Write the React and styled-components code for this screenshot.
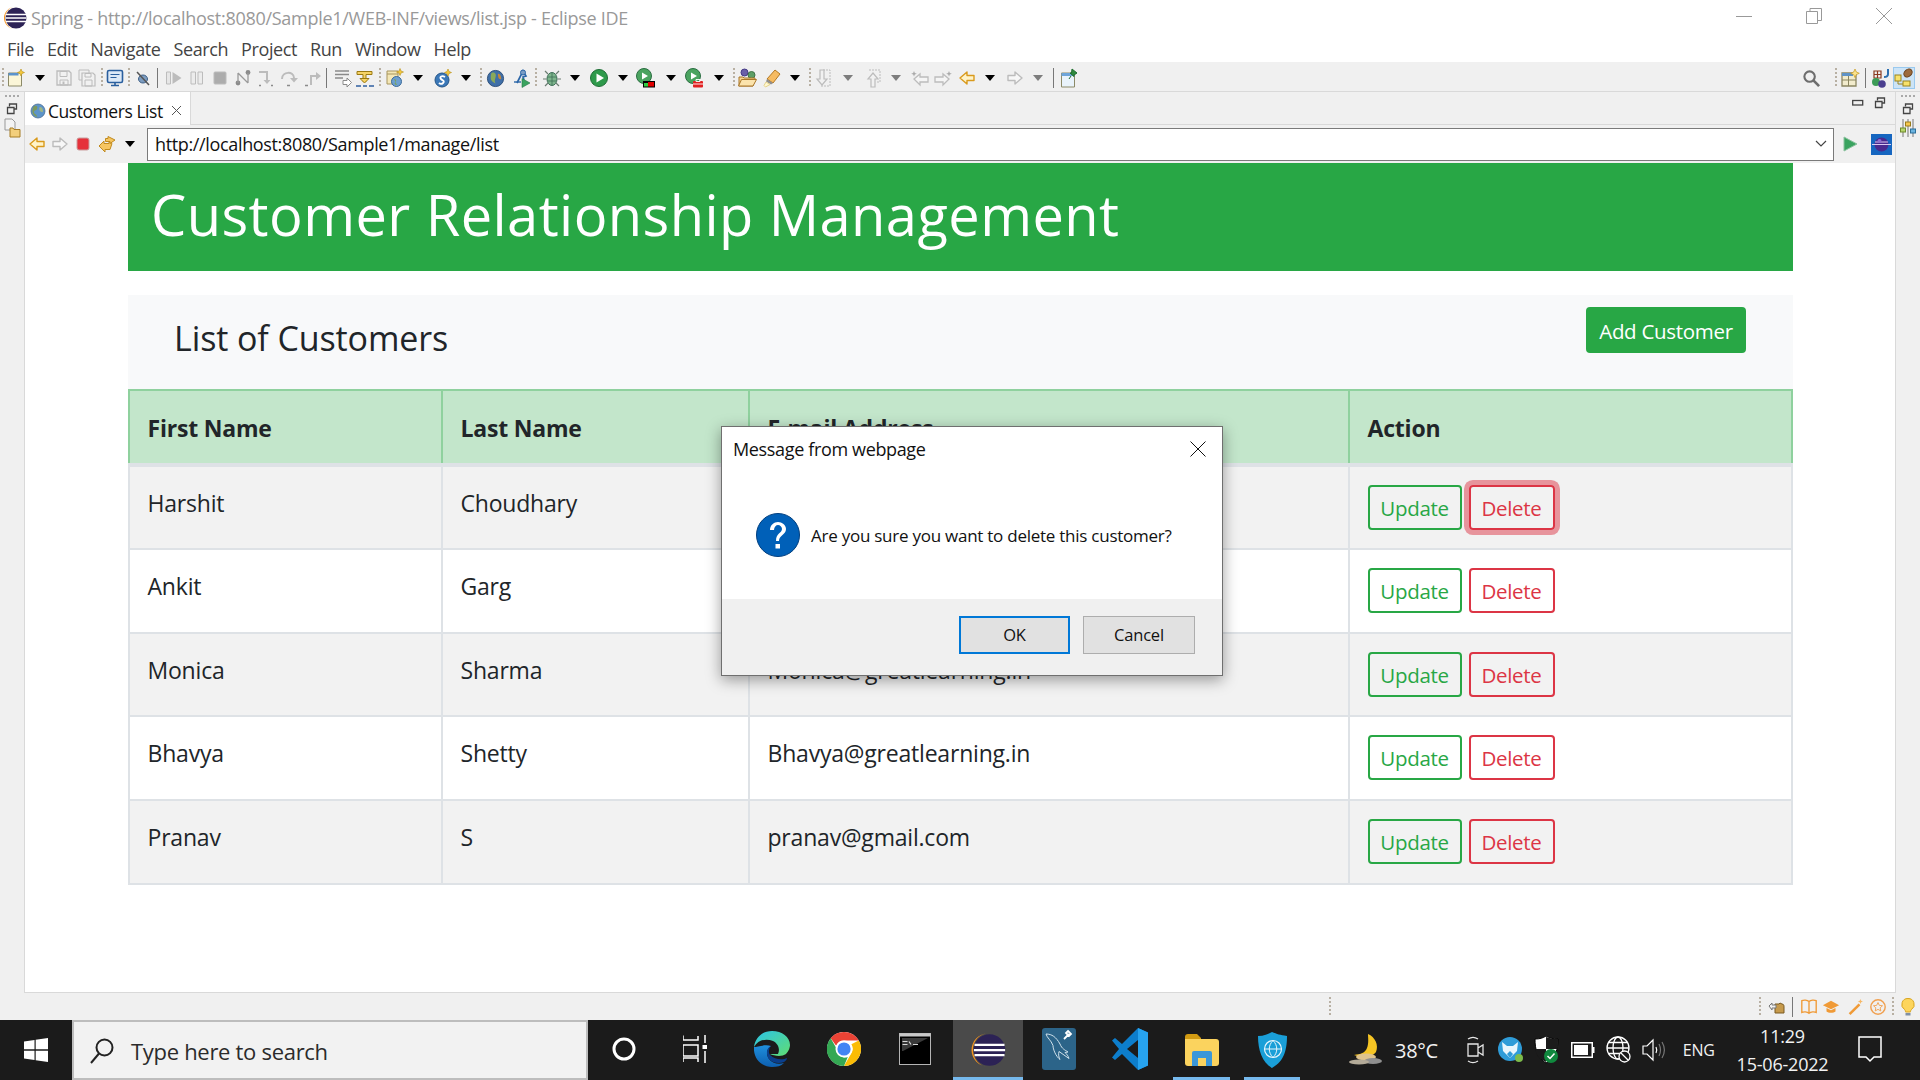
import React from "react";
import styled, { createGlobalStyle } from "styled-components";

const FONT = '"Open Sans", "Noto Sans", "Liberation Sans", sans-serif';

const Global = createGlobalStyle`
  html, body { margin: 0; padding: 0; background: #f0f0f0; }
  * { box-sizing: border-box; }
  body { font-family: ${FONT}; overflow: hidden; }
`;

const Window = styled.div`
  position: relative;
  width: 1920px;
  height: 1080px;
  display: flex;
  flex-direction: column;
  overflow: hidden;
`;

const TitleBar = styled.div`
  height: 36px;
  background: #fff;
  display: flex;
  align-items: center;
  padding-left: 3px;
  color: #999;
  font-size: 18px;
`;
const TitleText = styled.span`
  margin-left: 4px;
  letter-spacing: -0.28px;
  white-space: nowrap;
`;
const Caption = styled.div`
  margin-left: auto;
  display: flex;
  align-items: center;
  gap: 54px;
  padding-right: 28px;
  margin-top: -4px;
`;
const MenuBar = styled.div`
  height: 26px;
  background: #fff;
  display: flex;
  align-items: center;
  padding-left: 7px;
  gap: 13px;
  font-size: 18px;
  color: #444;
  letter-spacing: -0.4px;
`;
const Toolbar = styled.div`
  height: 30px;
  padding-top: 3px;
  background: #f0f0f0;
  border-bottom: 1px solid #d9d9d9;
  display: flex;
  align-items: center;
  flex: none;
`;
const Slot = styled.div`
  flex: none;
  width: 20px;
  height: 20px;
  margin-left: ${(p) => p.$gap}px;
  display: flex;
  align-items: center;
  justify-content: center;
  svg { flex: none; }
`;
const Caret = styled.div`
  width: 0;
  height: 0;
  border-left: 5.5px solid transparent;
  border-right: 5.5px solid transparent;
  border-top: 6px solid ${(p) => (p.$dim ? "#7d7d7d" : "#000")};
`;
const Grip = styled.div`
  width: 2px;
  height: 20px;
  background: repeating-linear-gradient(#b8b0a3 0 2px, transparent 2px 4px);
`;
const GripH = styled.div`
  width: 14px;
  height: 2px;
  background: repeating-linear-gradient(90deg, #a9a9a9 0 2px, transparent 2px 4px);
`;
const Sep = styled.div`
  width: 1px;
  height: 20px;
  background: #777;
`;
const Workspace = styled.div`
  flex: 1;
  display: flex;
  min-height: 0;
`;
const Trim = styled.div`
  width: 24px;
  flex: none;
  display: flex;
  flex-direction: column;
  align-items: center;
  padding-top: 3px;
  gap: 6px;
  svg:last-child { margin-top: -3px; }
`;
const Panel = styled.div`
  flex: 1;
  display: flex;
  flex-direction: column;
  border-left: 1px solid #d9d9d9;
  border-right: 1px solid #d9d9d9;
  border-bottom: 1px solid #d9d9d9;
  min-width: 0;
`;
const TabRow = styled.div`
  height: 33px;
  flex: none;
  display: flex;
  align-items: stretch;
  border-bottom: 1px solid #d9d9d9;
  background: #f0f0f0;
`;
const Tab = styled.div`
  width: 166px;
  margin-bottom: -1px;
  padding: 4px 0 0 5px;
  background: #fff;
  border-right: 1px solid #d9d9d9;
  display: flex;
  align-items: center;
  gap: 2px;
  font-size: 17.5px;
  color: #111;
  letter-spacing: -0.45px;
  white-space: nowrap;
`;
const TabClose = styled.span`
  margin-left: 6px;
  display: flex;
`;
const TabTools = styled.div`
  margin-left: auto;
  display: flex;
  align-items: center;
  gap: 10px;
  padding: 0 9px 10px 0;
`;
const AddressBar = styled.div`
  height: 38px;
  flex: none;
  padding-right: 4px;
  background: #f0f0f0;
  display: flex;
  align-items: center;
`;
const UrlBox = styled.div`
  flex: 1;
  height: 33px;
  margin-left: 7px;
  background: #fff;
  border: 1.5px solid #7a7a7a;
  display: flex;
  align-items: center;
  justify-content: space-between;
  padding: 0 6px 0 7px;
  font-size: 18px;
  color: #111;
  letter-spacing: -0.35px;
`;
const Browser = styled.div`
  flex: 1;
  background: #fff;
  padding: 0 102px 0 103px;
`;
const Jumbotron = styled.div`
  height: 108px;
  background: #28a745;
  color: #fff;
  font-size: 56px;
  font-weight: 400;
  line-height: 103px;
  padding-left: 23px;
  letter-spacing: 0.44px;
  white-space: nowrap;
`;
const ListHead = styled.div`
  height: 94px;
  margin-top: 24px;
  background: #f8f9fa;
  display: flex;
  justify-content: space-between;
  align-items: flex-start;
  padding: 12px 47px 0 46px;
`;
const ListTitle = styled.h2`
  margin: 7px 0 0;
  font-size: 34px;
  font-weight: 400;
  line-height: 48px;
  color: #212529;
  letter-spacing: -0.1px;
`;
const ActionButton = styled.button`
  font-family: ${FONT};
  font-size: 20.5px;
  letter-spacing: -0.3px;
  white-space: nowrap;
  height: ${(p) => (p.$solid ? "46px" : "45px")};
  padding: 1px 0 0;
  width: ${(p) => (p.$solid ? "160px" : p.$tone === "red" ? "86px" : "94px")};
  border-radius: 4px;
  border: 2px solid ${(p) => (p.$tone === "red" ? "#dc3545" : "#28a745")};
  background: ${(p) => (p.$solid ? "#28a745" : "transparent")};
  color: ${(p) => (p.$solid ? "#fff" : p.$tone === "red" ? "#dc3545" : "#28a745")};
  box-shadow: ${(p) => (p.$focus ? "0 0 0 5px rgba(220,53,69,.5)" : "none")};
`;
const Table = styled.table`
  width: 100%;
  table-layout: fixed;
  border-collapse: collapse;
  font-size: 23px;
  color: #212529;
  letter-spacing: -0.2px;
`;
const Th = styled.th`
  height: 75px;
  background: #c3e6cb;
  border: 2px solid #8fd19e;
  border-bottom: 4px solid #dee2e6;
  padding: 2px 17.5px 0;
  text-align: left;
  font-weight: 700;
  width: ${(p) => p.$w}px;
`;
const Row = styled.tr`
  background: ${(p) => (p.$odd ? "#f2f2f2" : "#fff")};
`;
const Td = styled.td`
  height: 83.8px;
  border: 2px solid #dee2e6;
  padding: 18px 17.5px 0;
  vertical-align: top;
  line-height: 37px;
`;
const ButtonPair = styled.div`
  display: flex;
  gap: 7px;
`;
const StatusBar = styled.div`
  height: 27px;
  flex: none;
  background: #f0f0f0;
  display: flex;
  align-items: center;
`;
const Taskbar = styled.div`
  height: 60px;
  flex: none;
  background: #1b1b1b;
  display: flex;
  align-items: center;
`;
const SearchBox = styled.div`
  width: 516px;
  height: 60px;
  margin-left: 26px;
  flex: none;
  background: #f2f2f2;
  border: 2px solid #bdbdbd;
  display: flex;
  align-items: center;
  padding: 1px 0 0 16px;
  gap: 17px;
  font-size: 22px;
  color: #2b2b2b;
  letter-spacing: -0.3px;
`;
const TaskItem = styled.div`
  flex: none;
  width: ${(p) => p.$w}px;
  height: 60px;
  margin-left: ${(p) => p.$gap}px;
  display: flex;
  align-items: center;
  justify-content: center;
  background: ${(p) => (p.$active ? "#4a4a4a" : "transparent")};
  border-bottom: 3px solid ${(p) => (p.$open ? "#76b9ed" : "transparent")};
  padding-top: ${(p) => (p.$open ? "3px" : "0")};
`;
const Tray = styled.div`
  flex: none;
  display: flex;
  align-items: center;
  height: 60px;
  color: #f2f2f2;
`;
const TrayText = styled.span`
  flex: none;
  margin-left: ${(p) => p.$gap}px;
  font-size: ${(p) => p.$size}px;
  letter-spacing: -0.3px;
`;
const Clock = styled.div`
  flex: none;
  width: 110px;
  margin-left: 13px;
  text-align: center;
  font-size: 18px;
  line-height: 28px;
  letter-spacing: -0.2px;
  white-space: nowrap;
`;
const Dialog = styled.div`
  position: absolute;
  left: 721px;
  top: 426px;
  width: 502px;
  height: 250px;
  background: #fff;
  border: 1px solid #6f6f6f;
  box-shadow: 0 4px 14px rgba(0, 0, 0, 0.38);
  display: flex;
  flex-direction: column;
  color: #111;
`;
const DialogHead = styled.div`
  height: 44px;
  display: flex;
  align-items: center;
  justify-content: space-between;
  padding: 0 16px 0 11px;
  font-size: 18px;
  letter-spacing: -0.35px;
`;
const DialogBody = styled.div`
  flex: 1;
  display: flex;
  align-items: center;
  gap: 11px;
  padding: 0 0 0 34px;
  font-size: 17px;
  letter-spacing: -0.25px;
`;
const DialogFoot = styled.div`
  height: 76px;
  background: #f0f0f0;
  display: flex;
  justify-content: flex-end;
  gap: 13px;
  padding: 17px 27px 0 0;
`;
const DialogButton = styled.button`
  font-family: ${FONT};
  font-size: 16.5px;
  letter-spacing: -0.2px;
  width: ${(p) => (p.$primary ? "111px" : "112px")};
  height: 38px;
  padding: 0 0 2px;
  background: #e1e1e1;
  color: #111;
  border: ${(p) => (p.$primary ? "2px solid #0078d7" : "1.5px solid #adadad")};
`;

/* ---- drawings ---- */
const S = ({ s = 20, v = 20, children }) => (
  <svg width={s} height={s} viewBox={`0 0 ${v} ${v}`} fill="none">{children}</svg>
);
const OFF = "#bcbcbc";
const Eclipse = ({ s = 24 }) => (
  <S s={s} v={24}>
    <path d="M12 1A11 11 0 0 0 12 23A10 11 0 0 1 12 1Z" fill="#f7941e" />
    <circle cx="13" cy="12" r="10.5" fill="#2c2255" />
    <path d="M3 8.6h20M2.6 12h20.8M3 15.4h20" stroke="#fff" strokeWidth="1.5" />
  </S>
);
const Globe = ({ s = 16 }) => (
  <S s={s} v={16}>
    <circle cx="8" cy="8" r="7" fill="#5d94c9" />
    <path d="M4 3c3-1 4 1 3 3S4 7 4 9s2 2 3 4-3 0-4-2-1-6 1-8Z" fill="#7c9a5e" />
    <path d="M10 4c2 0 3 2 3 4s-2 1-3 0-1-4 0-4Z" fill="#9db586" />
    <circle cx="8" cy="8" r="7" stroke="#4a6d94" strokeWidth=".8" />
  </S>
);
const Arrow = ({ c = "#d99a1c", f = "#fff3c8", flip }) => (
  <S v={20}>
    <path
      d="M3 10l7-6v3.5h7v5h-7V16Z"
      fill={f}
      stroke={c}
      strokeWidth="1.4"
      strokeLinejoin="round"
      transform={flip ? "matrix(-1 0 0 1 20 0)" : undefined}
    />
  </S>
);
const RestoreSmall = () => (
  <S s={12} v={12}>
    <path d="M3.5 3.5V1h7v5H8" stroke="#444" strokeWidth="1.3" />
    <path d="M1.5 4.5h6.5v6H1.5Z" stroke="#444" strokeWidth="1.3" />
  </S>
);
const ToolIcons = {
  new: (
    <S>
      <path d="M2.5 5h13v13h-13Z" fill="#fbf6d8" stroke="#8c8a68" />
      <path d="M2.5 5h10v2.5h-10Z" fill="#5b93cc" />
      <path d="M15 1l1 2.5 2.5 1-2.5 1-1 2.5-1-2.5-2.5-1 2.5-1Z" fill="#f5c93b" stroke="#b58d18" strokeWidth=".6" />
    </S>
  ),
  save: (
    <S>
      <path d="M3 3h12l2 2v12H3Z" fill="#f1f1f1" stroke={OFF} strokeWidth="1.3" />
      <path d="M6 3.5h7v5H6ZM6 12h8v5H6Z" stroke={OFF} />
      <path d="M8.5 13.5h2v2.5h-2Z" fill={OFF} />
    </S>
  ),
  saveAll: (
    <S>
      <path d="M2 2h10v3M2 2v10h3" stroke={OFF} />
      <path d="M5 5h11l2 2v11H5Z" fill="#f1f1f1" stroke={OFF} strokeWidth="1.2" />
      <path d="M8 12h7v6H8ZM8 5.5h6v3.5H8Z" stroke={OFF} />
    </S>
  ),
  monitor: (
    <S>
      <rect x="2.5" y="2.5" width="15" height="12" rx="1.5" fill="#dce9f7" stroke="#2a5f9e" strokeWidth="1.6" />
      <path d="M5.5 6.5h9M5.5 9.5h6" stroke="#2a5f9e" strokeWidth="1.2" />
      <path d="M6 17.5h8M10 15v2" stroke="#2a5f9e" strokeWidth="1.6" />
    </S>
  ),
  skip: (
    <S>
      <ellipse cx="10" cy="11" rx="4.5" ry="4" fill="#7c9cc0" stroke="#3e5f86" />
      <path d="M4 4l12 13" stroke="#555" strokeWidth="1.5" />
    </S>
  ),
  resume: (
    <S>
      <path d="M2.5 4h4v12h-4Z" fill="#e6e6e6" stroke={OFF} />
      <path d="M8.5 4l9 6-9 6Z" fill={OFF} />
    </S>
  ),
  pause: (
    <S>
      <path d="M4 4h4.5v12H4ZM11 4h4.5v12H11Z" fill="#ececec" stroke={OFF} />
    </S>
  ),
  stop: (
    <S>
      <rect x="4" y="4" width="12" height="12" rx="1" fill="#acacac" stroke={OFF} />
    </S>
  ),
  disconnect: (
    <S>
      <circle cx="5" cy="15" r="2.4" fill="#8b8b8b" />
      <circle cx="15" cy="4.5" r="2.4" fill="#8b8b8b" />
      <path d="M5 5v10M5 5l10 10M15 5v10" stroke="#9a9a9a" strokeWidth="1.3" />
    </S>
  ),
  stepInto: (
    <S>
      <path d="M3 4h8v9" stroke={OFF} strokeWidth="2" />
      <path d="M7.5 12h7l-3.5 4Z" fill={OFF} />
      <path d="M3 17.5h2M15 17.5h2" stroke="#8b8b8b" strokeWidth="1.5" />
    </S>
  ),
  stepOver: (
    <S>
      <path d="M3 11C3 3 15 3 15 10" stroke={OFF} strokeWidth="2" />
      <path d="M11 10h8l-4 4.5Z" fill={OFF} />
      <path d="M8 17.5h3" stroke="#8b8b8b" strokeWidth="1.5" />
    </S>
  ),
  stepRet: (
    <S>
      <path d="M8 17V8h8" stroke={OFF} strokeWidth="2" />
      <path d="M13 4l5 4-5 4Z" fill={OFF} />
      <path d="M2 17.5h3" stroke="#8b8b8b" strokeWidth="1.5" />
    </S>
  ),
  drop: (
    <S>
      <path d="M2 3h14M2 6.5h14M2 10h8" stroke="#8a8a8a" strokeWidth="1.6" />
      <path d="M10 12.5h4V10l4.5 4.5L14 19v-2.5h-4Z" fill="#fff" stroke="#8a8a8a" />
    </S>
  ),
  useStep: (
    <S>
      <path d="M2 3.5h15v3H11v7H8v-7H2Z" fill="#f6d365" stroke="#9b7a12" />
      <path d="M5 10.5h9l-4.5 4.5Z" fill="#f6d365" stroke="#9b7a12" />
      <path d="M1 18h5M8 18h4M14 18h5" stroke="#2f5fa0" strokeWidth="1.6" />
    </S>
  ),
  server: (
    <S>
      <path d="M2 3h11v13H2Z" fill="#f4e7b6" stroke="#a7955f" />
      <path d="M2 6h11" stroke="#a7955f" />
      <circle cx="11.5" cy="13.5" r="5" fill="#6d9fd0" stroke="#3a6a9a" />
      <path d="M9 11c2 0 3 2 1.5 3s-1 3 1.5 3" fill="#79a35f" />
      <path d="M15 .5l1 2.5 2.5 1-2.5 1-1 2.5-1-2.5-2.5-1 2.5-1Z" fill="#f5c93b" stroke="#b58d18" strokeWidth=".6" />
    </S>
  ),
  spring: (
    <S>
      <circle cx="9" cy="12" r="7" fill="#3b78b8" stroke="#255587" />
      <path d="M12 9C9 7 6 9 8 11s4 2 2 4-4 0-4 0" stroke="#fff" strokeWidth="1.8" />
      <path d="M15 1l1 2.5 2.5 1-2.5 1-1 2.5-1-2.5-2.5-1 2.5-1Z" fill="#f5c93b" stroke="#b58d18" strokeWidth=".6" />
    </S>
  ),
  globe: (
    <S s={19}>
      <circle cx="10" cy="10" r="8.5" fill="#3f6fa8" stroke="#2b4d77" />
      <path d="M6 4c4-1 5 2 4 5s-1 5 0 6-5-2-5-5 0-5 1-6Z" fill="#8aa95a" />
      <path d="M13 5c2 0 3 3 3 5s-3 0-3-1-1-4 0-4Z" fill="#c4883a" />
    </S>
  ),
  runAnt: (
    <S>
      <path d="M5 15L11 3l3 5-3 1 1 3" stroke="#2c66a8" strokeWidth="1.7" />
      <circle cx="11" cy="4.5" r="2.5" fill="#7a9cc4" stroke="#2c66a8" />
      <path d="M2 14h7" stroke="#2c66a8" strokeWidth="1.4" />
      <path d="M10 10.5l8 4.5-8 4.5Z" fill="#3aa35f" stroke="#25794a" strokeWidth=".6" />
    </S>
  ),
  bug: (
    <S>
      <ellipse cx="10" cy="11" rx="5" ry="6.5" fill="#7db58c" stroke="#3d6f57" />
      <path d="M10 5v12M5.5 9h9M5.5 13h9" stroke="#3d6f57" strokeWidth=".8" />
      <path d="M6 6L3 3M14 6l3-3M4.5 11H1M15.5 11H19M6 15l-3 3M14 15l3 3" stroke="#6c7d73" strokeWidth="1.2" />
    </S>
  ),
  run: (
    <S>
      <circle cx="10" cy="10" r="8.5" fill="#2e9a4b" stroke="#1f6e36" />
      <path d="M7.5 5.5l7.5 4.5-7.5 4.5Z" fill="#fff" />
    </S>
  ),
  runCov: (
    <S>
      <circle cx="8" cy="8" r="7.5" fill="#4aa35f" stroke="#2b6e42" />
      <path d="M6 4.5l6 3.5-6 3.5Z" fill="#fff" />
      <rect x="7" y="13" width="12" height="6.5" fill="#000" />
      <rect x="12" y="14" width="6" height="4.5" fill="#e00000" />
      <rect x="8" y="15" width="4" height="3.5" fill="#2ecc40" />
    </S>
  ),
  runExt: (
    <S>
      <circle cx="8" cy="8" r="7.5" fill="#4aa35f" stroke="#2b6e42" />
      <path d="M6 4.5l6 3.5-6 3.5Z" fill="#fff" />
      <rect x="8" y="13" width="10" height="6.5" rx="1" fill="#e02020" />
      <path d="M8 16h10M11 11.500h4v2h-4Z" stroke="#fff" strokeWidth=".9" />
    </S>
  ),
  folder: (
    <S>
      <circle cx="7.5" cy="4.5" r="3.5" fill="#6a5fa8" stroke="#453a86" />
      <circle cx="14.5" cy="7" r="3.5" fill="#5d9e66" stroke="#3e7347" />
      <path d="M2 9h4l1 1h11v2L16 18H2Z" fill="#f7d58e" stroke="#a9772a" />
      <path d="M1.500 18l3-6.500h15L16 18Z" fill="#fbe3ac" stroke="#a9772a" />
    </S>
  ),
  pen: (
    <S>
      <path d="M13 2l5 4-7 9-6-4Z" fill="#f6bb62" stroke="#b47a23" />
      <path d="M5 11l6 4-2 1.500-5-3Z" fill="#8f8f8f" />
      <path d="M4 14l4 2.500-4.500 2.500-1.500-1.500Z" fill="#fff8d0" stroke="#e5d28b" />
    </S>
  ),
  nextAnn: (
    <S>
      <path d="M8 2h7v16H6" stroke={OFF} strokeDasharray="2 1" />
      <path d="M5 2h4v9h3l-5 6-5-6h3Z" fill="#f1f1f1" stroke={OFF} strokeWidth="1.2" />
    </S>
  ),
  prevAnn: (
    <S>
      <path d="M6 2h11v12h-4" stroke={OFF} strokeDasharray="2 1" />
      <path d="M8 19v-8H5l5-6 5 6h-3v8Z" fill="#f1f1f1" stroke={OFF} strokeWidth="1.2" />
    </S>
  ),
  backEdit: (
    <S>
      <path d="M4 11l6-5v3h8v5h-8v3Z" fill="#f5f5f5" stroke={OFF} strokeWidth="1.3" />
      <path d="M4 3l.8 2 2 .8-2 .8-.8 2-.8-2-2-.8 2-.8Z" fill="#a9a9a9" />
    </S>
  ),
  fwdEdit: (
    <S>
      <path d="M16 11l-6-5v3H2v5h8v3Z" fill="#f5f5f5" stroke={OFF} strokeWidth="1.3" />
      <path d="M16 3l.8 2 2 .8-2 .8-.8 2-.8-2-2-.8 2-.8Z" fill="#a9a9a9" />
    </S>
  ),
  back: <Arrow />,
  fwdOff: <Arrow c={OFF} f="#f7f7f7" flip />,
  pin: (
    <S>
      <path d="M2.5 5h13v14h-13Z" fill="#e9f3fb" stroke="#8c8a68" />
      <path d="M2.5 5h13v3h-13Z" fill="#6ea5da" />
      <path d="M13 1l5 4-3 2 0 1.500-4-3.500h1.500ZM12 8l-2 3" fill="#2f8a3e" stroke="#1f6e2e" />
    </S>
  ),
  search: (
    <S s={19}>
      <circle cx="8" cy="8" r="5.5" stroke="#6d6d6d" strokeWidth="2.2" />
      <path d="M12 12l6 6" stroke="#6d6d6d" strokeWidth="2.8" />
    </S>
  ),
  perspective: (
    <S>
      <path d="M2 5h14v13H2Z" fill="#f2eccd" stroke="#8a8560" strokeWidth="1.3" />
      <path d="M2 5h11v3H2Z" fill="#5f93c7" />
      <path d="M2 12h14M8.500 8v10" stroke="#8a8560" />
      <path d="M15 1l1.300 3 3 1.300-3 1.300-1.300 3-1.300-3-3-1.300 3-1.300Z" fill="#fbe38c" stroke="#c59a1c" strokeWidth=".7" />
    </S>
  ),
  jee: (
    <S>
      <path d="M3 3h7v7H3ZM6.500 3v7M3 6.500h7" stroke="#8b3a1e" strokeWidth="1.2" />
      <path d="M17 1v5c0 2-2 3-4 3" stroke="#2d6fb0" strokeWidth="2" />
      <circle cx="5" cy="14" r="4" fill="#3c9b57" />
      <circle cx="11" cy="16" r="3.8" fill="#4b3f8f" />
    </S>
  ),
  java: (
    <S>
      <rect x="1" y="7" width="6" height="6" fill="#f7e26b" stroke="#9a8420" />
      <rect x="9" y="13" width="7" height="5" fill="#f7e26b" stroke="#9a8420" />
      <path d="M4 13v3h5" stroke="#9a8420" />
      <ellipse cx="14" cy="5" rx="4.5" ry="3.5" transform="rotate(-40 14 5)" fill="#9c6a3c" stroke="#6b4522" />
    </S>
  ),
  bookmark: (
    <S>
      <path d="M7 10V7h4l1-1 2 1c2 0 2 2 2 3v6H7Z" fill="#c69a4c" stroke="#7a5b22" />
      <path d="M1 9l3-3v2h4v3H4v2Z" fill="#f1f1f1" stroke="#777" />
    </S>
  ),
  book: (
    <S s={18}>
      <path d="M10 4C8 2 4 2 2 3v13c2-1 6-1 8 1 2-2 6-2 8-1V3c-2-1-6-1-8 1ZM10 4v13" stroke="#f09a36" strokeWidth="1.5" />
    </S>
  ),
  hat: (
    <S s={18}>
      <path d="M10 3L1 8l9 4.500L19 8Z" fill="#f09a36" />
      <path d="M5 11v4c2 2 8 2 10 0v-4l-5 2.500Z" fill="#f09a36" />
    </S>
  ),
  wand: (
    <S s={18}>
      <path d="M3 17L14 6l2 2L5 19Z" fill="#f09a36" />
      <path d="M16 1l.8 2 2 .8-2 .8-.8 2-.8-2-2-.8 2-.8Z" fill="#f7b866" />
    </S>
  ),
  star: (
    <S s={18}>
      <circle cx="10" cy="10" r="8" stroke="#f0a050" strokeWidth="1.6" />
      <path d="M10 5l1.500 3.200 3.500.4-2.600 2.300.7 3.500L10 12.600l-3.100 1.800.7-3.500L5 8.600l3.500-.4Z" stroke="#f0a050" />
    </S>
  ),
  bulb: (
    <S>
      <path d="M10 1.500a6 6 0 0 0-3.500 11c1 1 1 2 1 2.500h5c0-.5 0-1.500 1-2.500A6 6 0 0 0 10 1.500Z" fill="#fdd55c" stroke="#d9a520" />
      <path d="M7.500 16h5v2.500h-5Z" fill="#8090a5" />
    </S>
  ),
  stopRed: (
    <S>
      <rect x="4" y="4" width="12" height="12" rx="2" fill="#e5313a" stroke="#c9a0a0" />
    </S>
  ),
  sync: (
    <S>
      <path d="M2 12l5-5v2.500h5v-2l3 2-2 6H8v2.500Z" fill="#f6c560" stroke="#c08a1e" />
      <path d="M11 2.500l7 3.500-5 3.500V7.500H8.500V4.500H11Z" fill="#f6c560" stroke="#c08a1e" />
    </S>
  ),
  caret: <Caret />,
  caretDim: <Caret $dim />,
  grip: <Grip />,
  sep: <Sep />,
};

const renderRow = (items, size = 20) => {
  let prev = 0;
  return items.map(([name, c], i) => {
    const gap = c - size / 2 - prev;
    prev = c + size / 2;
    return <Slot key={i} $gap={gap}>{ToolIcons[name]}</Slot>;
  });
};

const TOOLS = [
  ["grip", 3], ["new", 16], ["caret", 40], ["save", 64], ["saveAll", 87], ["grip", 102], ["monitor", 115],
  ["grip", 129], ["skip", 143], ["sep", 157], ["resume", 174], ["pause", 197], ["stop", 220], ["disconnect", 243],
  ["stepInto", 266], ["stepOver", 289], ["stepRet", 313], ["sep", 326], ["drop", 343], ["useStep", 365],
  ["grip", 380], ["server", 395], ["caret", 418], ["spring", 443], ["caret", 466], ["grip", 481], ["globe", 495],
  ["runAnt", 522], ["grip", 536], ["bug", 552], ["caret", 575], ["run", 599], ["caret", 623], ["runCov", 646],
  ["caret", 671], ["runExt", 695], ["caret", 719], ["grip", 734], ["folder", 747], ["pen", 772], ["caret", 795],
  ["grip", 810], ["nextAnn", 825], ["caretDim", 848], ["prevAnn", 873], ["caretDim", 896], ["backEdit", 920],
  ["fwdEdit", 943], ["back", 967], ["caret", 990], ["fwdOff", 1015], ["caretDim", 1038], ["sep", 1053], ["pin", 1069],
  ["search", 1811], ["grip", 1836], ["perspective", 1850], ["sep", 1865], ["jee", 1881],
];
const AddressItems = [["back", 12], ["fwdOff", 35], ["stopRed", 58], ["sync", 82], ["caret", 105]];
const StatusItems = [
  ["grip", 1330], ["grip", 1760], ["bookmark", 1778], ["sep", 1792], ["book", 1809], ["hat", 1831], ["wand", 1855],
  ["star", 1878], ["grip", 1893], ["bulb", 1908],
];

const ActivePerspective = styled.div`
  flex: none;
  width: 22px;
  height: 22px;
  margin-left: 2px;
  background: #cce4f7;
  border: 1px solid #99c9ef;
  display: flex;
  align-items: center;
  justify-content: center;
`;

const Go = () => (
  <S v={20}><path d="M4 3l13 7-13 7Z" fill="#3aa35f" stroke="#8cc29f" /></S>
);
const WebBrowserButton = () => (
  <S s={21} v={21}>
    <rect width="21" height="21" fill="#1666c0" />
    <circle cx="10.5" cy="10.5" r="7" fill="#4a2a8f" />
    <path d="M1 10.5h19M4 8h13" stroke="#d9c9f0" />
    <circle cx="8.5" cy="7" r="2" fill="#8f6fd0" />
  </S>
);

const Question = () => (
  <svg width="44" height="44" viewBox="0 0 44 44">
    <circle cx="22" cy="22" r="21.5" fill="#0060b8" stroke="#003f7f" />
    <path d="M14 17c0-5 4-8 8-8s8 3 8 7c0 6-7 6-7 12h-3c0-8 6-8 6-12 0-2-2-4-4-4s-4 2-4 5Z" fill="#fff" />
    <rect x="19.5" y="31" width="4.5" height="4.5" fill="#fff" />
  </svg>
);

const WinLogo = () => (
  <svg width="24" height="24" viewBox="0 0 24 24" fill="#fff">
    <path d="M0 3.500L10.500 2v9.300H0ZM11.700 1.800L24 0v11.300H11.700ZM0 12.700h10.500V22L0 20.500ZM11.700 12.700H24V24l-12.300-1.800Z" />
  </svg>
);
const Magnifier = () => (
  <svg width="24" height="26" viewBox="0 0 24 26" fill="none" stroke="#222" strokeWidth="2">
    <circle cx="14.5" cy="9.5" r="8" />
    <path d="M9 15.500L1 25" />
  </svg>
);
const TaskIcons = {
  cortana: (
    <svg width="24" height="24" viewBox="0 0 24 24" fill="none"><circle cx="12" cy="12" r="10" stroke="#fff" strokeWidth="3" /></svg>
  ),
  taskView: (
    <svg width="24" height="28" viewBox="0 0 24 28" fill="none" stroke="#fff" strokeWidth="1.5">
      <path d="M0 5V.5M0 5h15V1M0 10h15v11H0ZM0 27v-4h15v4M22 0v8M22 16v12" />
      <rect x="19.5" y="10" width="5" height="4" fill="#fff" stroke="none" />
    </svg>
  ),
  edge: (
    <svg width="36" height="36" viewBox="0 0 36 36">
      <defs>
        <linearGradient id="eg1" x1="0" y1="0" x2="1" y2="1"><stop offset="0" stopColor="#2bc4e8" /><stop offset="1" stopColor="#60dd72" /></linearGradient>
        <linearGradient id="eg2" x1="0" y1="0" x2="0" y2="1"><stop offset="0" stopColor="#1f8fdc" /><stop offset="1" stopColor="#0d5fb0" /></linearGradient>
      </defs>
      <path d="M18 0C8 0 1 7 0 16c4-7 12-9 19-6 6 3 7 9 5 13h-8c4 2 12 3 16 0 3-3 4-7 4-9C36 6 28 0 18 0Z" fill="url(#eg1)" />
      <path d="M0 16C-1 28 8 36 18 36c5 0 9-1 12-4-6 2-12 0-15-4s-3-10 2-13c-6-2-14 1-17 1Z" fill="url(#eg2)" />
      <path d="M17 15c-5 2-5 9-2 13 3 4 10 5 15 3 2-1 3-3 3-4-4 2-12 2-17-3-2-3-1-7 1-9Z" fill="#0b3f8c" />
    </svg>
  ),
  chrome: (
    <svg width="34" height="36" viewBox="0 0 36 36">
      <circle cx="18" cy="18" r="18" fill="#fff" />
      <path d="M18 0a18 18 0 0 1 15.600 9H18a9 9 0 0 0-8.300 5.500L3.900 6.500A18 18 0 0 1 18 0Z" fill="#ea4335" />
      <path d="M33.600 9A18 18 0 0 1 18 36l7.800-13.500A9 9 0 0 0 25.800 13Z" fill="#fbbc05" />
      <path d="M3.900 6.500L11 19a8 8 0 0 0 11 7.500L18 36A18 18 0 0 1 3.900 6.500Z" fill="#34a853" />
      <circle cx="18" cy="18" r="9" fill="#fff" />
      <circle cx="18" cy="18" r="7" fill="#4285f4" />
    </svg>
  ),
  cmd: (
    <svg width="32" height="32" viewBox="0 0 32 32">
      <rect x="0.5" y="0.5" width="31" height="31" fill="#000" stroke="#b5b5b5" />
      <rect x="0.5" y="0.5" width="31" height="3" fill="#c9c9c9" />
      <path d="M3 5h26L4 18H3Z" fill="#3a3a3a" />
      <path d="M3.500 8.500h5M3.500 11.500h5M10 8.500l2 3M14 11.500h5" stroke="#d8d8d8" strokeWidth="1.2" />
    </svg>
  ),
  eclipse: <Eclipse s={36} />,
  mysql: (
    <svg width="34" height="42" viewBox="0 0 34 42" fill="none">
      <rect width="34" height="42" rx="3" fill="#2c6489" />
      <path d="M4 6c6 0 10 3 14 10 2 5 5 6 8 8l-3 .5c2 2 3 3 4 6-3-2-7-5-10-7-1 3 0 6 1 8-4-3-7-10-7-14C9 12 5 10 4 6Z" stroke="#cfe0ea" strokeWidth="1" />
      <path d="M22 11l5-5M26 3l3 3-2 2-3-3Z" stroke="#fff" strokeWidth="1.8" />
    </svg>
  ),
  vscode: (
    <svg width="36" height="42" viewBox="0 0 36 42">
      <path d="M26 0l10 4.500v33L26 42 10 26 3 32 0 29.500 7 21 0 12.500 3 10l7 6Z" fill="#0d7ecc" />
      <path d="M26 0l10 4.500v33L26 42Z" fill="#27a3ef" />
      <path d="M26 12L15 21l11 9Z" fill="#1b1b1b" />
    </svg>
  ),
  explorer: (
    <svg width="34" height="32" viewBox="0 0 34 32">
      <path d="M0 3a3 3 0 0 1 3-3h9l4 4v6H0Z" fill="#d29b12" />
      <path d="M0 5h31a3 3 0 0 1 3 3v21a3 3 0 0 1-3 3H3a3 3 0 0 1-3-3Z" fill="#fbd35e" />
      <path d="M7 32V19a2 2 0 0 1 2-2h16a2 2 0 0 1 2 2v13h-6v-8h-8v8Z" fill="#3b97d8" />
    </svg>
  ),
  shield: (
    <svg width="32" height="36" viewBox="0 0 32 36">
      <path d="M2 4C8 4 12 2 16 0c5 2 8 3 15 4 0 12-2 25-15 32C6 30 2 18 2 4Z" fill="#1a9fd8" />
      <circle cx="17" cy="17" r="8.5" fill="none" stroke="#e9f6fc" strokeWidth="1.2" />
      <path d="M8.500 17h17M17 8.500c-5 5-5 12 0 17M17 8.500c5 5 5 12 0 17" stroke="#e9f6fc" fill="none" />
    </svg>
  ),
};
const TrayIcons = {
  weather: (
    <svg width="36" height="34" viewBox="0 0 36 34">
      <path d="M21 1c7 3 11 11 8 18-3 5-14 6-22 3 7-1 11-2 13-7 2-5 1-10 1-14Z" fill="#f6c524" />
      <ellipse cx="19" cy="24" rx="10" ry="3.5" fill="#dfc38d" />
      <ellipse cx="26" cy="28" rx="9" ry="3" fill="#8f8f8f" />
      <ellipse cx="12" cy="29" rx="10" ry="2.5" fill="#b3aa98" />
    </svg>
  ),
  camera: (
    <svg width="18" height="28" viewBox="0 0 18 28" fill="none" stroke="#e6e6e6" strokeWidth="1.3">
      <path d="M1 8h10v12H1ZM11 12l5-3v10l-5-3M1 3c3-2 7-2 10 0M1 25c3 2 7 2 10 0" />
    </svg>
  ),
  fox: (
    <svg width="26" height="26" viewBox="0 0 26 26">
      <circle cx="12" cy="12" r="12" fill="#2f9cd8" />
      <path d="M4 5l5 4h6l5-4-1 9-7 7-7-7Z" fill="#e8f6fd" />
      <path d="M12 14l-3 3 3 4 3-4Z" fill="#2f9cd8" />
      <circle cx="21" cy="21" r="4" fill="#7dbb4a" />
    </svg>
  ),
  defender: (
    <svg width="26" height="28" viewBox="0 0 26 28">
      <path d="M1 3c5 0 8-1 11-3 3 2 7 3 12 3 0 10-2 19-12 24C3 22 1 13 1 3Z" fill="#fff" stroke="#000" />
      <path d="M12 1v12H1.500C2 19 5 23 12 26V13h11.500C24 9 24 6 24 3 19 3 15 2 12 1Z" fill="#1b1b1b" />
      <circle cx="17" cy="20" r="7" fill="#10893e" />
      <path d="M13.500 20l2.500 2.500 4.500-5" stroke="#fff" strokeWidth="1.5" fill="none" />
    </svg>
  ),
  battery: (
    <svg width="24" height="16" viewBox="0 0 24 16">
      <rect x=".75" y=".75" width="20.5" height="14.5" fill="none" stroke="#fff" strokeWidth="1.5" />
      <rect x="3" y="3" width="14" height="10" fill="#fff" />
      <rect x="22" y="5" width="1.5" height="6" fill="#fff" />
    </svg>
  ),
  network: (
    <svg width="26" height="28" viewBox="0 0 26 28" fill="none" stroke="#fff" strokeWidth="1.3">
      <circle cx="12" cy="12" r="11" />
      <ellipse cx="12" cy="12" rx="5" ry="11" />
      <path d="M1 12h22M2.500 6.500h19M2.500 17.500h19" />
      <circle cx="18.5" cy="20.5" r="5.5" fill="#1b1b1b" />
      <path d="M15 17l7 7" />
    </svg>
  ),
  speaker: (
    <svg width="24" height="24" viewBox="0 0 24 24" fill="none" stroke="#fff" strokeWidth="1.2">
      <path d="M1 8h4l6-6v20l-6-6H1Z" />
      <path d="M14 9c1 2 1 4 0 6" />
      <path d="M17 6c2 4 2 8 0 12M20 4c3 5 3 11 0 16" stroke="#777" />
    </svg>
  ),
  notify: (
    <svg width="24" height="28" viewBox="0 0 24 28" fill="none" stroke="#fff" strokeWidth="1.5">
      <path d="M1 1h22v20h-7l-4 4-4-4H1Z" />
    </svg>
  ),
};

const customers = [
  ["Harshit", "Choudhary", "Harshit@greatlearning.in"],
  ["Ankit", "Garg", "Ankit@greatlearning.in"],
  ["Monica", "Sharma", "Monica@greatlearning.in"],
  ["Bhavya", "Shetty", "Bhavya@greatlearning.in"],
  ["Pranav", "S", "pranav@gmail.com"],
];

const Menu = ["File", "Edit", "Navigate", "Search", "Project", "Run", "Window", "Help"];

export default function App() {
  return (
    <Window>
      <Global />
      <TitleBar>
        <Eclipse />
        <TitleText>Spring - http://localhost:8080/Sample1/WEB-INF/views/list.jsp - Eclipse IDE</TitleText>
        <Caption>
          <svg width="16" height="16" fill="none" stroke="#999"><path d="M0 8.500h16" /></svg>
          <svg width="16" height="16" fill="none" stroke="#999"><path d="M.5 3.500h11v12H.5ZM4 3.500V.5h11.500v12h-4" /></svg>
          <svg width="16" height="16" fill="none" stroke="#999"><path d="M0 0l16 16M16 0L0 16" /></svg>
        </Caption>
      </TitleBar>
      <MenuBar>
        {Menu.map((m) => <span key={m}>{m}</span>)}
      </MenuBar>
      <Toolbar>
        {renderRow(TOOLS)}
        <ActivePerspective>{ToolIcons.java}</ActivePerspective>
      </Toolbar>
      <Workspace>
        <Trim>
          <GripH />
          <RestoreSmall />
          <S>
            <path d="M3 1h7l3 3v8H3Z" fill="#f3f3f3" stroke="#999" />
            <path d="M8 10h3l1 1.500h6V19H8Z" fill="#f3cf7c" stroke="#a67c25" />
          </S>
        </Trim>
        <Panel>
          <TabRow>
            <Tab>
              <Globe />
              Customers List
              <TabClose>
                <svg width="11" height="11" stroke="#555" fill="none"><path d="M1 1l9 9M10 1l-9 9" /></svg>
              </TabClose>
            </Tab>
            <TabTools>
              <svg width="12" height="8" fill="none" stroke="#444" strokeWidth="1.3"><rect x=".7" y="1.500" width="10" height="4.500" /></svg>
              <RestoreSmall />
            </TabTools>
          </TabRow>
          <AddressBar>
            {renderRow(AddressItems)}
            <UrlBox>
              http://localhost:8080/Sample1/manage/list
              <svg width="12" height="8" fill="none" stroke="#444" strokeWidth="1.2"><path d="M1 1l5 5 5-5" /></svg>
            </UrlBox>
            <Slot $gap={6}><Go /></Slot>
            <Slot $gap={11}><WebBrowserButton /></Slot>
          </AddressBar>
          <Browser>
            <Jumbotron>Customer Relationship Management</Jumbotron>
            <ListHead>
              <ListTitle>List of Customers</ListTitle>
              <ActionButton $solid>Add Customer</ActionButton>
            </ListHead>
            <Table>
              <thead>
                <tr>
                  <Th $w={313}>First Name</Th>
                  <Th $w={307}>Last Name</Th>
                  <Th $w={600}>E-mail Address</Th>
                  <Th>Action</Th>
                </tr>
              </thead>
              <tbody>
                {customers.map((c, i) => (
                  <Row key={c[0]} $odd={i % 2 === 0}>
                    <Td>{c[0]}</Td>
                    <Td>{c[1]}</Td>
                    <Td>{c[2]}</Td>
                    <Td>
                      <ButtonPair>
                        <ActionButton>Update</ActionButton>
                        <ActionButton $tone="red" $focus={i === 0}>Delete</ActionButton>
                      </ButtonPair>
                    </Td>
                  </Row>
                ))}
              </tbody>
            </Table>
          </Browser>
        </Panel>
        <Trim>
          <GripH />
          <RestoreSmall />
          <S>
            <path d="M5 1v18M10 1v18M15 1v18" stroke="#777" />
            <rect x="2.5" y="10" width="5" height="4" fill="#b6d56b" stroke="#6f8a2c" />
            <rect x="7.5" y="4" width="5" height="4" fill="#f4c64d" stroke="#9a7a1a" />
            <rect x="12.5" y="11" width="5" height="4" fill="#6bb4e0" stroke="#2c6f9a" />
          </S>
        </Trim>
      </Workspace>
      <StatusBar>{renderRow(StatusItems)}</StatusBar>
      <Taskbar>
        <Slot $gap={26}><WinLogo /></Slot>
        <SearchBox>
          <Magnifier />
          Type here to search
        </SearchBox>
        <TaskItem $w={24} $gap={24}>{TaskIcons.cortana}</TaskItem>
        <TaskItem $w={24} $gap={47}>{TaskIcons.taskView}</TaskItem>
        <TaskItem $w={36} $gap={47}>{TaskIcons.edge}</TaskItem>
        <TaskItem $w={36} $gap={36}>{TaskIcons.chrome}</TaskItem>
        <TaskItem $w={36} $gap={35}>{TaskIcons.cmd}</TaskItem>
        <TaskItem $w={70} $gap={20} $active $open>{TaskIcons.eclipse}</TaskItem>
        <TaskItem $w={36} $gap={18}>{TaskIcons.mysql}</TaskItem>
        <TaskItem $w={36} $gap={35}>{TaskIcons.vscode}</TaskItem>
        <TaskItem $w={57} $gap={25} $open>{TaskIcons.explorer}</TaskItem>
        <TaskItem $w={56} $gap={14} $open>{TaskIcons.shield}</TaskItem>
        <Tray>
          <Slot $gap={55}>{TrayIcons.weather}</Slot>
          <TrayText $gap={20} $size={20}>38°C</TrayText>
          <Slot $gap={28}>{TrayIcons.camera}</Slot>
          <Slot $gap={15}>{TrayIcons.fox}</Slot>
          <Slot $gap={16}>{TrayIcons.defender}</Slot>
          <Slot $gap={16}>{TrayIcons.battery}</Slot>
          <Slot $gap={16}>{TrayIcons.network}</Slot>
          <Slot $gap={15}>{TrayIcons.speaker}</Slot>
          <TrayText $gap={19} $size={16}>ENG</TrayText>
          <Clock>11:29<br />15-06-2022</Clock>
          <Slot $gap={22}>{TrayIcons.notify}</Slot>
        </Tray>
      </Taskbar>
      <Dialog>
        <DialogHead>
          Message from webpage
          <svg width="16" height="16" stroke="#111" fill="none"><path d="M.5.5l15 15M15.500.5l-15 15" /></svg>
        </DialogHead>
        <DialogBody>
          <Question />
          Are you sure you want to delete this customer?
        </DialogBody>
        <DialogFoot>
          <DialogButton $primary>OK</DialogButton>
          <DialogButton>Cancel</DialogButton>
        </DialogFoot>
      </Dialog>
    </Window>
  );
}
